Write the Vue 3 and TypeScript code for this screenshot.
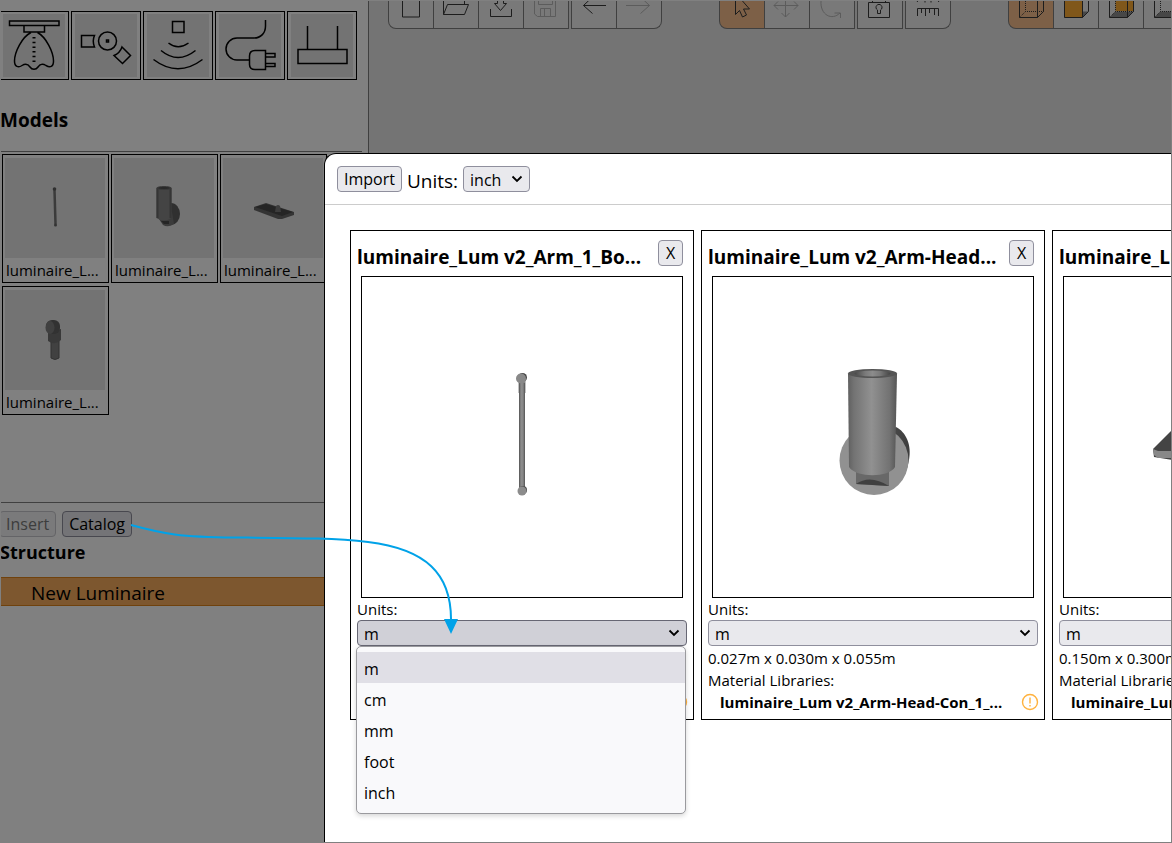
<script setup lang="ts">
import { ref } from 'vue'

interface Model {
  id: string
  label: string
}
interface ImportItem {
  id: string
  title: string
  unit: string
  size: string
  library: string
  open: boolean
}

const units: string[] = ['m', 'cm', 'mm', 'foot', 'inch']
const globalUnit = ref('inch')
const shapes: string[] = ['lamp', 'joint', 'sensor', 'plug', 'router']
const toolGroups: string[][][] = [
  [['new', 'open', 'import', 'save'], ['undo', 'redo']],
  [['select', 'move', 'rotate'], ['lock'], ['measure']],
  [['wire', 'front', 'back', 'base']],
]
const disabledTools: string[] = ['save', 'redo', 'move', 'rotate']
const activeTools: string[] = ['select', 'wire']
const models: Model[] = [
  { id: 'arm', label: 'luminaire_L...' },
  { id: 'head', label: 'luminaire_L...' },
  { id: 'base', label: 'luminaire_L...' },
  { id: 'con', label: 'luminaire_L...' },
]
const items = ref<ImportItem[]>([
  { id: 'arm', title: 'luminaire_Lum v2_Arm_1_Bo...', unit: 'm', size: '', library: '', open: true },
  { id: 'head', title: 'luminaire_Lum v2_Arm-Head...', unit: 'm', size: '0.027m x 0.030m x 0.055m', library: 'luminaire_Lum v2_Arm-Head-Con_1_...', open: false },
  { id: 'base', title: 'luminaire_Lum v2_Base_1_B...', unit: 'm', size: '0.150m x 0.300m x 0.040m', library: 'luminaire_Lum v2_Base_1_Body...', open: false },
])

function choose(item: ImportItem, unit: string): void {
  item.unit = unit
  item.open = false
}
function removeItem(id: string): void {
  items.value = items.value.filter((i) => i.id !== id)
}
</script>

<template>
  <div class="app">
    <aside class="sidebar">
      <div class="shapes">
        <button v-for="s in shapes" :key="s" class="shape" :aria-label="s">
          <svg v-if="s === 'lamp'" viewBox="3 14 62 63">
            <path d="M9.500 21H59V25.500H9.500ZM24 25.500V32H44.500V25.500M31 32.500C22 37 14.500 52 14.500 61C14.500 67 18.500 68 22 65.500C25 63.500 28 64 30 67C32 70 36 70 38 67C40 64 43 63.500 46 65.500C50 68 53.500 67 53.500 61C53.500 52 46 37 37.500 32.500" />
            <path d="M34 37V64" stroke-width="3" stroke-dasharray="1.500 3.200" />
          </svg>
          <svg v-else-if="s === 'joint'" viewBox="75 14 62 63">
            <path d="M94.500 35.500H81.500V47H94.500Q92 41 94.500 35.500ZM122 47L130.500 55.500L122.500 63.500L114 55.500Q120 53 122 47Z" />
            <circle cx="107.500" cy="41" r="9" />
            <rect x="106.500" y="40" width="2" height="2" />
          </svg>
          <svg v-else-if="s === 'sensor'" viewBox="147 14 62 63">
            <path d="M172.500 21.500H184V32.500H172.500ZM168.500 43Q178 50.500 188.500 43M161 50.500Q178 64.500 195.500 50.500M153.500 59.500Q178 78 202.500 59.500" />
          </svg>
          <svg v-else-if="s === 'plug'" viewBox="219 14 62 63">
            <path d="M265.500 20V26C265.500 33 261 38 254 38H237A11 11 0 0 0 237 60H249.500M265.500 50.500V69.500H255Q249.500 69.500 249.500 64.500V56Q249.500 50.500 255 50.500ZM265.500 53.500H275V57H265.500M265.500 63.500H275V66.500H265.500" />
          </svg>
          <svg v-else viewBox="291 14 62 63">
            <path d="M298 49.500H347V63.500H298ZM307.500 26V49.500M337.500 26V49.500" />
          </svg>
        </button>
      </div>
      <h2 class="models-title">Models</h2>
      <div class="models">
        <button v-for="m in models" :key="m.id" class="model">
          <svg viewBox="0 0 100 100">
            <g v-if="m.id === 'arm'">
              <path d="M49.500 32L50.500 66" stroke="#3b3b3b" stroke-width="2.500" />
              <circle cx="49.500" cy="31" r="1.800" fill="#303030" />
              <circle cx="50.500" cy="67" r="1.500" fill="#333" />
            </g>
            <g v-else-if="m.id === 'head'">
              <ellipse cx="57" cy="56" rx="9" ry="11" fill="#303030" />
              <path d="M43 58L49 67Q54 70 60 66L58 54Z" fill="#3b3b3b" />
              <path d="M42.500 29.500V60Q50 65 57.500 60V29.500Z" fill="#444" />
              <path d="M43.500 30V60M56.500 30V60" stroke="#353535" stroke-width="2" />
              <ellipse cx="50" cy="30" rx="7" ry="1.500" fill="#292929" stroke="#3a3a3a" />
              <path d="M47 63H55V66H50Z" fill="#252525" />
            </g>
            <g v-else-if="m.id === 'base'">
              <path d="M31 49L43 45L71 54V57L59 61H55L31 52Z" fill="#343434" />
              <path d="M32 49L43 46L70 54L59 58Z" fill="#252525" />
              <path d="M52 54L53 48Q55 46 57 48L58 54Z" fill="#3d3d3d" />
            </g>
            <g v-else>
              <path d="M46 51V68Q50 71 54 68V51Z" fill="#414141" stroke="#333" />
              <path d="M43 42L56 39V50Q50 56 43 51Z" fill="#393939" />
              <rect x="41" y="30" width="14" height="14" rx="6" fill="#323232" />
              <ellipse cx="45" cy="37.500" rx="4.500" ry="6.500" fill="#404040" />
            </g>
          </svg>
          <span>{{ m.label }}</span>
        </button>
      </div>
      <div class="actions">
        <button class="btn" disabled>Insert</button>
        <button class="btn">Catalog</button>
      </div>
      <h2 class="structure-title">Structure</h2>
      <div class="tree-row">New Luminaire</div>
    </aside>

    <main class="stage">
      <div v-for="(group, gi) in toolGroups" :key="gi" class="toolbar">
        <div v-for="(part, pi) in group" :key="pi" class="tool-part">
          <button
            v-for="t in part"
            :key="t"
            class="tool"
            :class="{ active: activeTools.includes(t) }"
            :disabled="disabledTools.includes(t)"
            :aria-label="t"
          >
            <svg viewBox="0 0 44 27">
              <path v-if="t === 'new'" d="M13.500 -6V16H30.500V-6" />
              <path v-else-if="t === 'open'" d="M9.500 -5V13.500H30.500L34.500 3.500H13.500L9.500 13.500M30.500 3.500V-5" />
              <path v-else-if="t === 'import'" d="M18.500 -6V2.500H15.500L21.500 9.500L27.500 2.500H24.500V-6M11.500 8V15.500H32.500V8" />
              <path v-else-if="t === 'save'" d="M10.500 -6V13L13.500 15.500H31.500V-6M14.500 -6V3.500H28.500V-6M16.500 15.500V7.500H26.500V15.500M20.500 8V15.500" />
              <path v-else-if="t === 'undo'" d="M34 4.500H11.500M20.500 -4L11.500 4.500L20.500 12.500" />
              <path v-else-if="t === 'redo'" d="M9 4.500H32.500M23.500 -4L32.500 4.500L23.500 12.500" />
              <path v-else-if="t === 'select'" d="M15.500 -8V13.500L19.500 9.500L22.500 16L26.500 14L23.500 8H29.500L15.500 -8" />
              <path v-else-if="t === 'move'" d="M9 4.500H33M20.500 -7V16M13 .5L9 4.500L13 8.500M29 .5L33 4.500L29 8.500M16.500 12L20.500 16L24.500 12" />
              <path v-else-if="t === 'rotate'" d="M11 0C10 14 22 20 30 12M24.500 12H30.500V17" />
              <g v-else-if="t === 'lock'">
                <path d="M10.500 1.500H31.500V16.500H10.500ZM14.500 1.500V-4M27.500 1.500V-4" />
                <path d="M19.500 9A3 3 0 1 1 22.500 9V12.500H19.500Z" />
              </g>
              <path v-else-if="t === 'measure'" d="M11.500 15V7.500H32.500V15M15.500 7.500V12M19.500 7.500V15M23.500 7.500V12M28.500 7.500V14M15 -4L11 1M19 0V1.500M25 0V1.500M29 -4L33 1" />
              <g v-else>
                <path v-if="t === 'front' || t === 'back' || t === 'base'" class="shade" d="M10.500 16.500L16.500 10.500H34.500L28.500 16.500Z" />
                <path v-if="t === 'front'" class="gold" d="M10.500 -6H28.500V16.500H10.500Z" />
                <path v-if="t === 'back'" class="gold" d="M16.500 -6H34V10H16.500Z" />
                <path d="M10.500 -6V16.500H28.500V-6M28.500 16.500L34.500 10.500V-6" />
                <path v-if="t !== 'front'" class="hidden-edge" d="M16.500 -6V10.500H34.500M16.500 10.500L10.500 16.500" />
              </g>
            </svg>
          </button>
        </div>
      </div>
    </main>

    <section class="dialog" role="dialog" aria-label="Import models">
      <header class="dialog-head">
        <button class="btn">Import</button>
        <label for="all-units">Units:</label>
        <div class="select-wrap compact">
          <select id="all-units" v-model="globalUnit">
            <option v-for="u in units" :key="u">{{ u }}</option>
          </select>
          <svg viewBox="0 0 12 8"><path d="M1.500 1.500L6 6L10.500 1.500" /></svg>
        </div>
      </header>
      <div class="cards">
        <article v-for="item in items" :key="item.id" class="card">
          <div class="card-head">
            <h3>{{ item.title }}</h3>
            <button class="btn close" aria-label="Remove" @click="removeItem(item.id)">X</button>
          </div>
          <div class="preview">
            <svg viewBox="0 0 320 320">
              <defs>
                <linearGradient id="tube"><stop offset="0" stop-color="#606060" /><stop offset=".12" stop-color="#737373" /><stop offset=".48" stop-color="#919191" /><stop offset=".85" stop-color="#727272" /><stop offset="1" stop-color="#555" /></linearGradient>
                <linearGradient id="bore"><stop offset="0" stop-color="#484848" /><stop offset=".3" stop-color="#7a7a7a" /><stop offset=".5" stop-color="#8c8c8c" /><stop offset=".7" stop-color="#7a7a7a" /><stop offset="1" stop-color="#444" /></linearGradient>
                <linearGradient id="side"><stop offset="0" stop-color="#686868" /><stop offset="1" stop-color="#3c3c3c" /></linearGradient>
              </defs>
              <g v-if="item.id === 'arm'">
                <circle cx="160.500" cy="100.500" r="4.500" fill="#444" />
                <path d="M156.500 102H163.500V116H156.500Z" fill="#858585" />
                <rect x="157" y="106" width="6" height="107" fill="url(#tube)" />
                <path d="M157.500 106V211M162.500 106V211" stroke="#606060" />
                <circle cx="161" cy="213" r="4" fill="#4c4c4c" />
                <circle cx="160" cy="214" r="4.500" fill="#8c8c8c" />
                <circle cx="159" cy="101.500" r="5" fill="#898989" />
              </g>
              <g v-else-if="item.id === 'head'">
                <path d="M183 150C193 155 199 168 196 183C193 201 183 213 169 216L139 170Z" fill="url(#side)" />
                <circle cx="161" cy="183.500" r="34.500" fill="#919191" />
                <path d="M143 195V207L176 209V195Z" fill="#686868" />
                <path d="M143 207Q157 197 176 209Z" fill="#404040" />
                <path d="M135 97L136 190C143 201 176 201 182 190L184 97Z" fill="url(#tube)" />
                <ellipse cx="159.500" cy="96.500" rx="24.500" ry="4.500" fill="#555" />
                <ellipse cx="159.500" cy="96.500" rx="18" ry="3" fill="url(#bore)" />
              </g>
              <g v-else>
                <path d="M89 172L123 138L250 160L210 200L90 180Z" fill="#444" />
                <path d="M89 172L94 174H210V181H94L90 178Z" fill="#888" />
              </g>
            </svg>
          </div>
          <label class="line" :for="'unit-' + item.id">Units:</label>
          <div class="select-wrap" :class="{ open: item.open }">
            <select :id="'unit-' + item.id" v-model="item.unit">
              <option v-for="u in units" :key="u">{{ u }}</option>
            </select>
            <svg viewBox="0 0 12 8"><path d="M1.500 1.500L6 6L10.500 1.500" /></svg>
            <ul v-if="item.open" class="menu" role="listbox" aria-label="Units">
              <li v-for="u in units" :key="u" role="option" :aria-selected="u === item.unit" @click="choose(item, u)">{{ u }}</li>
            </ul>
          </div>
          <div class="line">{{ item.size }}</div>
          <div class="line"><template v-if="!item.open">Material Libraries:</template></div>
          <div class="library">
            <strong>{{ item.library }}</strong>
            <svg viewBox="0 0 18 18"><circle cx="9" cy="9" r="7.500" /><path d="M9 4.500V10.500M9 12V13.500" /></svg>
          </div>
        </article>
      </div>
    </section>

    <svg class="pointer" viewBox="0 0 340 120">
      <path d="M1 4C34 13 50 16 105 16.500C170 17 205 17 238 21C295 28 322 52 321 101" />
      <polygon points="314,98 328,98 321,113" />
    </svg>
  </div>
</template>

<style>
body {
  margin: 0;
}
</style>

<style scoped>
* {
  box-sizing: border-box;
}
.app {
  position: relative;
  display: flex;
  min-height: 100vh;
  overflow: hidden;
  border: 1px solid #808080;
  background: #747474;
  color: #000;
  font-family: "Open Sans", "Noto Sans", sans-serif;
  font-size: 15px;
}
button,
select {
  margin: 0;
  font: inherit;
  color: inherit;
}
h2,
h3 {
  margin: 0;
  font-size: 19px;
  line-height: 24px;
}
.sidebar {
  flex: none;
  width: 368px;
  border-right: 1px solid #3f3f3f;
  background: #808080;
}
.sidebar h2 {
  margin-left: -1px;
}
.shapes {
  display: flex;
  gap: 2px;
  margin: 10px 0 0 -2px;
}
.shape {
  width: 70px;
  height: 69px;
  padding: 2px 3px;
  border: 1px solid #000;
  background: none;
}
.shape svg {
  display: block;
  width: 62px;
  height: 63px;
  background: #737373;
  fill: none;
  stroke: #000;
  stroke-width: 1.5;
}
.models-title {
  margin: 28px 6px 19px 0;
}
.models {
  display: grid;
  grid-template-columns: repeat(3, 107px);
  align-content: start;
  gap: 3px 2px;
  height: 351px;
  margin-right: 6px;
  padding: 2px 1px;
  border-top: 1px solid #404040;
}
.model {
  width: 107px;
  height: 129px;
  padding: 3px 2px;
  border: 1px solid #000;
  background: none;
  text-align: left;
}
.model svg {
  display: block;
  width: 100px;
  height: 100px;
  background: #737373;
}
.model span {
  display: block;
  padding-left: 1px;
  white-space: nowrap;
  line-height: 24px;
}
.actions {
  display: flex;
  gap: 6px;
  margin-left: -2px;
  padding-top: 8px;
  border-top: 1px solid #404040;
}
.btn {
  height: 26px;
  padding: 0 6px;
  border: 1px solid #8f8f9d;
  border-radius: 4px;
  background: #e9e9ed;
  font-size: 16px;
  line-height: 24px;
}
.actions .btn {
  border-color: #48484f;
  background: #747477;
}
.actions .btn:disabled {
  border-color: #646467;
  background: #7a7a7b;
  color: #3d3d3d;
}
.sidebar .structure-title {
  margin-top: 3px;
  font-size: 18px;
}
.tree-row {
  height: 29px;
  margin-top: 13px;
  padding-left: 30px;
  border: solid #70420d;
  border-width: 1px 0;
  background: #7d572f;
  font-size: 19px;
  line-height: 30px;
}
.stage {
  display: flex;
  flex: 1;
  align-items: flex-start;
  gap: 57px;
  padding-left: 19px;
}
.toolbar {
  display: flex;
  gap: 2px;
}
.tool-part {
  display: flex;
}
.tool {
  width: 46px;
  height: 28px;
  margin-right: -1px;
  padding: 0;
  border: 1px solid #404040;
  border-top: 0;
  background: #797979;
}
.tool-part .tool:last-child {
  margin-right: 0;
}
.tool-part:first-child .tool:first-child {
  border-bottom-left-radius: 8px;
}
.tool-part:last-child .tool:last-child {
  border-bottom-right-radius: 8px;
}
.tool.active {
  background: #7d6047;
}
.tool svg {
  display: block;
  width: 44px;
  height: 27px;
  fill: none;
  stroke: #1d1d1d;
}
.tool:disabled svg {
  stroke: #5c5c5c;
}
.tool .gold {
  fill: #80571a;
  stroke: none;
}
.tool .shade {
  fill: #474747;
  stroke: none;
}
.tool .hidden-edge {
  stroke-dasharray: 1 1;
}
.dialog {
  position: absolute;
  inset: 152px 0 0 323px;
  overflow: hidden;
  border: solid #000;
  border-width: 1px 0 0 1px;
  border-top-left-radius: 12px;
  background: #fff;
}
.dialog-head {
  display: flex;
  align-items: center;
  height: 51px;
  padding-left: 12px;
  border-bottom: 1px solid #ccc;
}
.dialog-head label {
  margin: 0 5px;
  padding-top: 3px;
  font-size: 19px;
}
.select-wrap {
  position: relative;
}
.select-wrap select {
  display: block;
  width: 100%;
  height: 26px;
  padding: 1px 6px 0;
  appearance: none;
  border: 1px solid #8f8f9d;
  border-radius: 4px;
  background: #e9e9ed;
  font-size: 16px;
  line-height: 24px;
}
.select-wrap.compact {
  width: 67px;
}
.select-wrap > svg {
  position: absolute;
  top: 9px;
  right: 7px;
  width: 12px;
  height: 8px;
  fill: none;
  stroke: #000;
  stroke-width: 1.8;
  pointer-events: none;
}
.select-wrap.open select {
  border-color: #676774;
  background: #d0d0d7;
}
.cards {
  display: flex;
  gap: 7px;
  padding: 25px 0 0 25px;
}
.card {
  flex: none;
  width: 344px;
  height: 490px;
  padding: 9px 6px 0;
  border: 1px solid #000;
}
.card-head {
  display: flex;
  justify-content: space-between;
  height: 29px;
  padding-right: 4px;
}
.card-head h3 {
  padding-top: 5px;
  white-space: nowrap;
}
.btn.close {
  width: 25px;
}
.preview {
  width: 322px;
  height: 322px;
  margin: 7px 0 0 4px;
  border: 1px solid #000;
}
.preview svg {
  display: block;
}
.line {
  display: block;
  height: 22px;
  line-height: 22px;
  white-space: nowrap;
}
.select-wrap + .line {
  margin-top: 1px;
}
.library {
  display: flex;
  justify-content: space-between;
  align-items: center;
  height: 22px;
  padding-left: 12px;
}
.library strong {
  white-space: nowrap;
  line-height: 22px;
}
.library svg {
  flex: none;
  width: 18px;
  height: 18px;
  margin-right: -1px;
  margin-left: auto;
  fill: none;
  stroke: #ffb23e;
  stroke-width: 1.4;
}
.menu {
  position: absolute;
  z-index: 2;
  top: 26px;
  left: -1px;
  width: 330px;
  margin: 0;
  padding: 5px 0 6px;
  border: 1px solid #9a9a9e;
  border-radius: 5px;
  background: #f9f9fb;
  box-shadow: 0 2px 5px rgba(0, 0, 0, 0.16);
  font-size: 16px;
  list-style: none;
}
.menu li {
  height: 31px;
  padding-left: 7px;
  line-height: 34px;
}
.menu li[aria-selected="true"] {
  background: #e0dfe6;
}
.pointer {
  position: absolute;
  top: 520px;
  left: 129px;
  z-index: 3;
  width: 340px;
  height: 120px;
  pointer-events: none;
  fill: #00a2e8;
}
.pointer path {
  fill: none;
  stroke: #00a2e8;
  stroke-width: 2;
}
</style>
